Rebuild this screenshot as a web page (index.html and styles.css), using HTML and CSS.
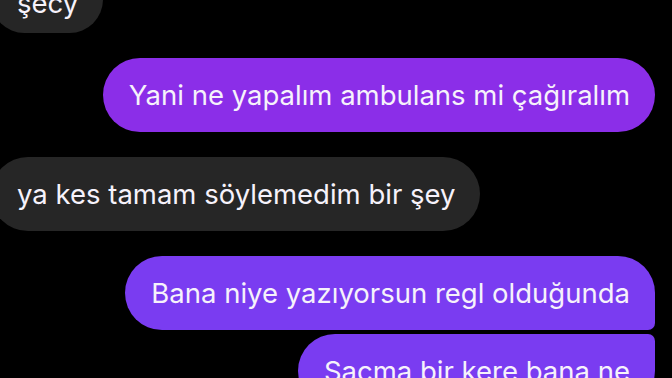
FILE: index.html
```html
<!DOCTYPE html>
<html lang="tr">

<head>
    <meta charset="UTF-8">
    <meta name="viewport" content="width=device-width, initial-scale=1.0">
    <title>Mesajlar</title>
    <link rel="stylesheet" href="styles.css">
</head>

<body>
    <div class="sohbet">
        <div class="mesaj gelen onceki">şecy</div>
        <div class="mesaj giden mor1">Yani ne yapalım ambulans mi çağıralım</div>
        <div class="mesaj gelen">ya kes tamam söylemedim bir şey</div>
        <div class="mesaj giden mor2 ilk">Bana niye yazıyorsun regl olduğunda</div>
        <div class="mesaj giden mor2 son">Saçma bir kere bana ne</div>
    </div>
</body>

</html>
```

FILE: styles.css
```css
* {
    margin: 0;
    padding: 0;
    box-sizing: border-box;
}

body {
    background: #000;
    font-family: Inter, Roboto, sans-serif;
    overflow: hidden;
}

.sohbet {
    display: flex;
    flex-direction: column;
    gap: 25px;
    margin-top: -34px;
    padding-right: 17px;
}

.mesaj {
    padding: 20px 25px 20px 26px;
    font-size: 27.5px;
    line-height: 34px;
    color: #f6f2fb;
    border-radius: 37px;
    white-space: nowrap;
}

.gelen {
    align-self: flex-start;
    margin-left: -9px;
    background: #262626;
}

.onceki {
    padding-bottom: 13px;
}

.giden {
    align-self: flex-end;
}

.mor1 {
    background: #8b2ee8;
}

.mor2 {
    background: #7a3cf1;
}

.ilk {
    border-bottom-right-radius: 7px;
}

.son {
    margin-top: -21px;
    border-top-right-radius: 7px;
}
```
